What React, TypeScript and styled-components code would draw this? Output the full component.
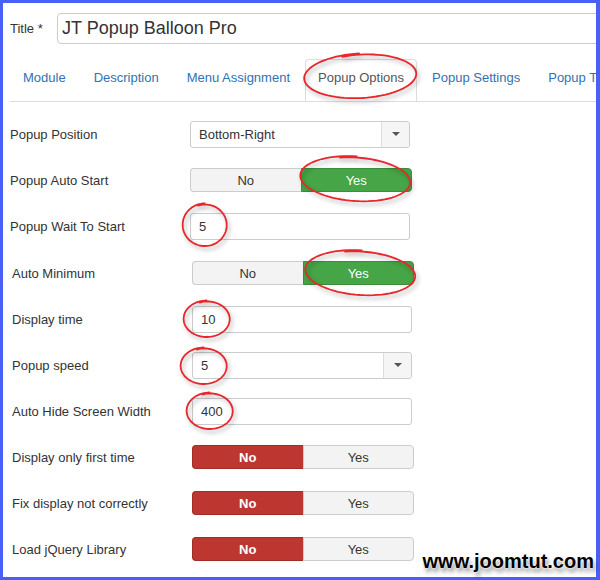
import React from 'react';
import styled, { createGlobalStyle } from 'styled-components';

const GlobalStyle = createGlobalStyle`
  html, body {
    margin: 0;
    padding: 0;
    background: #fff;
  }
  body {
    font-family: 'Liberation Sans', Arial, sans-serif;
    font-size: 13px;
    color: #333;
  }
`;

const Page = styled.div`
  position: relative;
  width: 600px;
  height: 580px;
  overflow: hidden;
`;

const Frame = styled.div`
  box-sizing: border-box;
  width: 600px;
  height: 580px;
  border-style: solid;
  border-color: #4b5ef7;
  border-width: 3px 4px 3px 3px;
  padding: 10px 0 0 7px;
  overflow: hidden;
  background: #fff;
`;

const TitleRow = styled.div`
  display: flex;
  align-items: center;
  height: 31px;
`;

const TitleLabel = styled.label`
  width: 47px;
  flex-shrink: 0;
  font-size: 13px;
  color: #333;
`;

const TitleInput = styled.div`
  box-sizing: border-box;
  flex-shrink: 0;
  width: 580px;
  height: 31px;
  border: 1px solid #ccc;
  border-radius: 4px;
  padding: 0 4px;
  display: flex;
  align-items: center;
  font-size: 18px;
  color: #333;
`;

const TabNav = styled.ul`
  display: flex;
  flex-wrap: nowrap;
  list-style: none;
  margin: 15px 0 0;
  padding: 0;
  width: 640px;
  border-bottom: 1px solid #ddd;
`;

const Tab = styled.li<{ $active?: boolean }>`
  box-sizing: border-box;
  flex-shrink: 0;
  height: 42px;
  margin-right: 2px;
  padding: 9px 12px 0;
  line-height: 18px;
  white-space: nowrap;
  font-size: 13px;
  border: 1px solid ${(p) => (p.$active ? '#ddd' : 'transparent')};
  border-bottom: none;
  border-radius: 4px 4px 0 0;
  color: ${(p) => (p.$active ? '#555' : '#3172b4')};
`;

const Fieldset = styled.div<{ $shift?: number }>`
  display: flex;
  flex-direction: column;
  padding-left: ${(p) => p.$shift ?? 0}px;
  margin-top: ${(p) => (p.$shift ? 1 : 9)}px;
`;

const Row = styled.div`
  display: flex;
  align-items: center;
  height: 46px;
`;

const Label = styled.label`
  width: 180px;
  flex-shrink: 0;
  font-size: 13px;
  color: #333;
`;

const TextInput = styled.div`
  box-sizing: border-box;
  width: 220px;
  height: 27px;
  border: 1px solid #ccc;
  border-radius: 3px;
  padding: 0 8px;
  display: flex;
  align-items: center;
  font-size: 13px;
  color: #333;
`;

const Select = styled(TextInput)`
  padding: 0 0 0 8px;
  background: #fff;
`;

const SelectValue = styled.span`
  flex: 1;
`;

const SelectButton = styled.span`
  width: 27px;
  height: 100%;
  border-left: 1px solid #ddd;
  background: #f5f5f5;
  border-radius: 0 3px 3px 0;
  display: flex;
  align-items: center;
  justify-content: center;
`;

const Caret = styled.span`
  width: 0;
  height: 0;
  border-left: 4px solid transparent;
  border-right: 4px solid transparent;
  border-top: 4px solid #555;
`;

const Toggle = styled.div`
  display: flex;
  width: 222px;
  height: 24px;
`;

const ToggleButton = styled.span<{ $on: boolean; $tone: 'yes' | 'no' }>`
  box-sizing: border-box;
  flex: 1;
  display: flex;
  align-items: center;
  justify-content: center;
  font-size: 13px;
  border: 1px solid
    ${(p) => (p.$on ? (p.$tone === 'yes' ? '#3b8e3b' : '#a02d27') : '#ccc')};
  background: ${(p) => (p.$on ? (p.$tone === 'yes' ? '#46a546' : '#bd362f') : '#f3f3f3')};
  color: ${(p) => (p.$on ? '#fff' : '#333')};
  font-weight: ${(p) => (p.$on && p.$tone === 'no' ? 'bold' : 'normal')};
  &:first-child {
    border-radius: 4px 0 0 4px;
    border-right: none;
  }
  &:last-child {
    border-radius: 0 4px 4px 0;
  }
`;

const Watermark = styled.div`
  position: absolute;
  right: 6px;
  bottom: 7px;
  font-family: 'Liberation Sans', Arial, sans-serif;
  font-weight: bold;
  font-size: 20px;
  color: #000;
  text-shadow: 0 0 2px #fff, 0 0 2px #fff, 2px 4px 4px rgba(0, 0, 0, 0.45);
`;

const Marks = styled.svg`
  position: absolute;
  left: 0;
  top: 0;
  pointer-events: none;
  filter: drop-shadow(2px 3px 2px rgba(0, 0, 0, 0.3));
`;

type Mark = { cx: number; cy: number; rx: number; ry: number; tilt: number };

const marks: Mark[] = [
  { cx: 361, cy: 76, rx: 56, ry: 22, tilt: -3 },
  { cx: 356, cy: 179, rx: 55, ry: 22, tilt: 4 },
  { cx: 205, cy: 225, rx: 22, ry: 21, tilt: 0 },
  { cx: 361, cy: 273, rx: 55, ry: 22, tilt: 4 },
  { cx: 207, cy: 319, rx: 23, ry: 18, tilt: 0 },
  { cx: 204, cy: 366, rx: 23, ry: 18, tilt: 0 },
  { cx: 210, cy: 411, rx: 23, ry: 18, tilt: 0 },
];

// hand-drawn loop: a little more than one turn, radius drifting so the ends overlap
const loopPath = ({ cx, cy, rx, ry, tilt }: Mark) => {
  const steps = 80;
  const start = -1.9;
  const turn = Math.PI * 2 * 1.05;
  const t = (tilt * Math.PI) / 180;
  const pts: string[] = [];
  for (let i = 0; i <= steps; i++) {
    const k = i / steps;
    const a = start + turn * k;
    const grow = 0.97 + 0.06 * k;
    const x = Math.cos(a) * rx * grow;
    const y = Math.sin(a) * ry * grow;
    const px = cx + x * Math.cos(t) - y * Math.sin(t);
    const py = cy + x * Math.sin(t) + y * Math.cos(t);
    pts.push(`${i === 0 ? 'M' : 'L'}${px.toFixed(1)} ${py.toFixed(1)}`);
  }
  return pts.join(' ');
};

const tabs = ['Module', 'Description', 'Menu Assignment', 'Popup Options', 'Popup Settings', 'Popup Template'];

const YesNo = ({ value }: { value: 'yes' | 'no' }) => (
  <Toggle>
    <ToggleButton $tone="no" $on={value === 'no'}>No</ToggleButton>
    <ToggleButton $tone="yes" $on={value === 'yes'}>Yes</ToggleButton>
  </Toggle>
);

const Dropdown = ({ value }: { value: string }) => (
  <Select>
    <SelectValue>{value}</SelectValue>
    <SelectButton>
      <Caret />
    </SelectButton>
  </Select>
);

const App = () => (
  <>
    <GlobalStyle />
    <Page>
      <Frame>
        <TitleRow>
          <TitleLabel>Title *</TitleLabel>
          <TitleInput>JT Popup Balloon Pro</TitleInput>
        </TitleRow>
        <TabNav>
          {tabs.map((tab) => (
            <Tab key={tab} $active={tab === 'Popup Options'}>
              {tab}
            </Tab>
          ))}
        </TabNav>
        <Fieldset>
          <Row>
            <Label>Popup Position</Label>
            <Dropdown value="Bottom-Right" />
          </Row>
          <Row>
            <Label>Popup Auto Start</Label>
            <YesNo value="yes" />
          </Row>
          <Row>
            <Label>Popup Wait To Start</Label>
            <TextInput>5</TextInput>
          </Row>
        </Fieldset>
        <Fieldset $shift={2}>
          <Row>
            <Label>Auto Minimum</Label>
            <YesNo value="yes" />
          </Row>
          <Row>
            <Label>Display time</Label>
            <TextInput>10</TextInput>
          </Row>
          <Row>
            <Label>Popup speed</Label>
            <Dropdown value="5" />
          </Row>
          <Row>
            <Label>Auto Hide Screen Width</Label>
            <TextInput>400</TextInput>
          </Row>
          <Row>
            <Label>Display only first time</Label>
            <YesNo value="no" />
          </Row>
          <Row>
            <Label>Fix display not correctly</Label>
            <YesNo value="no" />
          </Row>
          <Row>
            <Label>Load jQuery Library</Label>
            <YesNo value="no" />
          </Row>
        </Fieldset>
      </Frame>
      <Marks width={600} height={580} viewBox="0 0 600 580">
        {marks.map((m, i) => (
          <path key={i} d={loopPath(m)} fill="none" stroke="#e8262b" strokeWidth={1.8} strokeLinecap="round" />
        ))}
      </Marks>
      <Watermark>www.joomtut.com</Watermark>
    </Page>
  </>
);

export default App;
